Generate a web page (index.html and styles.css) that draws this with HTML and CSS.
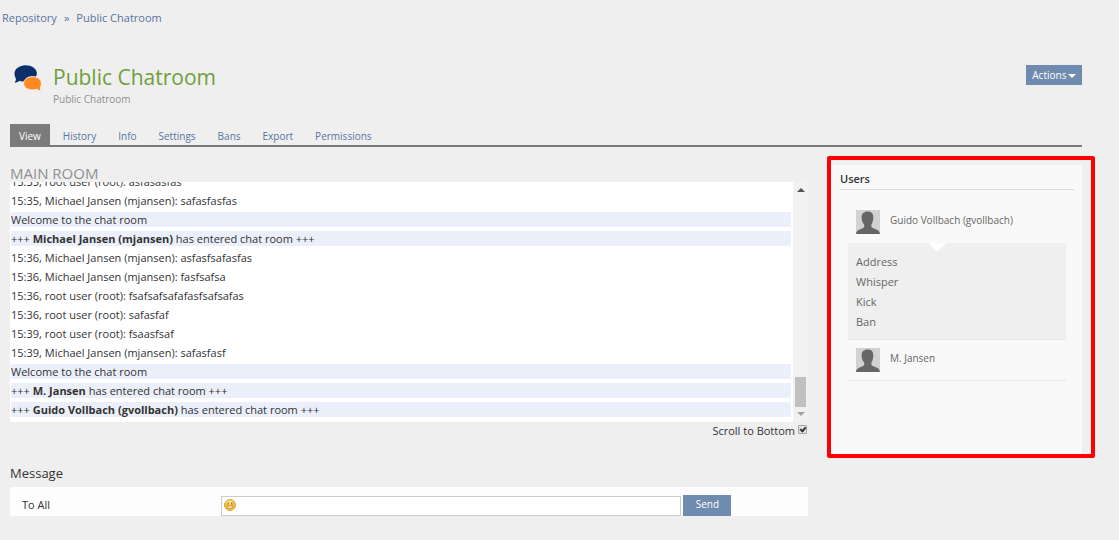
FILE: index.html
```
<!DOCTYPE html>
<html lang="en">

<head>
  <meta charset="UTF-8">
  <meta name="viewport" content="width=device-width, initial-scale=1.0">
  <title>Public Chatroom</title>
  <link rel="stylesheet" href="styles.css">
</head>

<body>
  <nav class="breadcrumb">
    <a href="#">Repository</a>
    <span>»</span>
    <a href="#">Public Chatroom</a>
  </nav>

  <header class="page-header">
    <svg class="room-icon" viewBox="0 0 28 28" width="28" height="28" aria-hidden="true">
      <path fill="#0b2f6b" d="M11.500 1.200C5.500 1.200 .5 4.800 .5 9.500c0 2.300 .7 3.800 1.400 5 .1 1.400-.5 2.900-1.200 4.300 2.200-.2 3.700-1 4.800-2 1.600 .6 3.600 .8 5.600 .8 6.200 0 11.800-3.600 11.800-8.300S17.500 1.200 11.500 1.200z" />
      <path fill="#ff8a1f" stroke="#efefef" d="M18.500 12.600c-5 0-8.900 2.900-8.900 6.700s3.900 6.700 8.900 6.700c1.600 0 3-.3 4.200-.8 1.200 1 2.700 1.800 4.600 2-.7-1.200-1.100-2.500-1-3.800.8-1.200 1.200-2.600 1.200-4.100 0-3.800-4-6.700-9-6.700z" />
    </svg>
    <div class="page-title">
      <h1>Public Chatroom</h1>
      <p>Public Chatroom</p>
    </div>
    <button class="btn actions" type="button">Actions <span class="caret"></span></button>
  </header>

  <nav class="tabs">
    <a href="#" class="active">View</a>
    <a href="#">History</a>
    <a href="#">Info</a>
    <a href="#">Settings</a>
    <a href="#">Bans</a>
    <a href="#">Export</a>
    <a href="#">Permissions</a>
  </nav>

  <div class="content">
    <main class="chat">
      <h2>MAIN ROOM</h2>
      <div class="log">
        <div class="messages">
          <div class="msg">15:35, root user (root): asfasasfas</div>
          <div class="msg">15:35, Michael Jansen (mjansen): safasfasfas</div>
          <div class="msg notice">Welcome to the chat room</div>
          <div class="msg notice">+++ <b>Michael Jansen (mjansen)</b> has entered chat room +++</div>
          <div class="msg">15:36, Michael Jansen (mjansen): asfasfsafasfas</div>
          <div class="msg">15:36, Michael Jansen (mjansen): fasfsafsa</div>
          <div class="msg">15:36, root user (root): fsafsafsafafasfsafsafas</div>
          <div class="msg">15:36, root user (root): safasfaf</div>
          <div class="msg">15:39, root user (root): fsaasfsaf</div>
          <div class="msg">15:39, Michael Jansen (mjansen): safasfasf</div>
          <div class="msg notice">Welcome to the chat room</div>
          <div class="msg notice">+++ <b>M. Jansen</b> has entered chat room +++</div>
          <div class="msg notice">+++ <b>Guido Vollbach (gvollbach)</b> has entered chat room +++</div>
        </div>
        <div class="scrollbar" aria-hidden="true">
          <span class="arrow up"></span>
          <span class="thumb"></span>
          <span class="arrow down"></span>
        </div>
      </div>
      <div class="autoscroll">
        <label for="autoscroll">Scroll to Bottom</label>
        <input type="checkbox" id="autoscroll" checked>
      </div>

      <h3>Message</h3>
      <form class="message-form">
        <label for="message">To All</label>
        <div class="message-row">
          <div class="message-box">
            <button class="smiley" type="button" aria-label="Insert smiley">
              <svg viewBox="0 0 12 12" width="12" height="12">
                <circle cx="6" cy="6" r="5.500" fill="#f6c33c" stroke="#dda63c" />
                <ellipse cx="5.500" cy="3.500" rx="3.500" ry="2" fill="#fbe08a" />
                <path fill="#8a6a2a" d="M3.500 3.500h1.200v2H3.500zM7.200 3.500h1.200v2H7.200z" />
                <path fill="#fbe9b4" stroke="#b08030" stroke-width=".7" d="M2.800 7h6.400c-.4 1.700-1.600 2.600-3.200 2.600S3.200 8.700 2.800 7z" />
              </svg>
            </button>
            <input type="text" id="message">
          </div>
          <button class="btn send" type="submit">Send</button>
        </div>
      </form>
    </main>

    <aside class="highlight">
      <section class="users">
        <h2>Users</h2>
        <ul class="user-list">
          <li>
            <div class="user">
              <svg class="avatar" viewBox="0 0 24 24" width="24" height="24" aria-hidden="true">
                <rect width="24" height="24" fill="#d2d2d2" />
                <path fill="#666" d="M11.500 1.500c3.600-.3 6 1.800 5.800 6.200 0 2.500-.8 5.200-1.900 6.800v2.600c1.300 1.800 4.800 2 6.800 3.400 1 .8 1.500 2 1.800 3.500H0c.2-1.600.7-2.600 1.800-3.400 2.300-1.500 5.400-1.800 6.400-3.500v-2.600C6.600 13 5.600 10 5.600 7.700c0-4 2.200-6.200 5.900-6.200z" />
              </svg>
              <span>Guido Vollbach (gvollbach)</span>
            </div>
            <div class="user-menu">
              <a href="#">Address</a>
              <a href="#">Whisper</a>
              <a href="#">Kick</a>
              <a href="#">Ban</a>
            </div>
          </li>
          <li>
            <div class="user">
              <svg class="avatar" viewBox="0 0 24 24" width="24" height="24" aria-hidden="true">
                <rect width="24" height="24" fill="#d2d2d2" />
                <path fill="#666" d="M11.500 1.500c3.600-.3 6 1.800 5.800 6.200 0 2.500-.8 5.200-1.900 6.800v2.600c1.300 1.800 4.800 2 6.800 3.400 1 .8 1.500 2 1.800 3.500H0c.2-1.600.7-2.600 1.800-3.400 2.300-1.500 5.400-1.800 6.400-3.500v-2.600C6.600 13 5.600 10 5.600 7.700c0-4 2.200-6.200 5.900-6.200z" />
              </svg>
              <span>M. Jansen</span>
            </div>
          </li>
        </ul>
      </section>
    </aside>
  </div>
</body>

</html>
```
FILE: styles.css
```
* {
  box-sizing: border-box;
}

body {
  margin: 0;
  background: #efefef;
  color: #333;
  font-family: "Open Sans", Verdana, Arial, sans-serif;
  font-size: 11px;
  line-height: 15px;
}

h1,
h2,
h3,
p,
ul {
  margin: 0;
  padding: 0;
  font-weight: normal;
}

a {
  color: #5874a0;
  text-decoration: none;
}

input,
button {
  font-family: inherit;
}

.btn {
  border: 0;
  background: #708bb0;
  color: #fff;
  font-size: 10px;
  line-height: 14px;
  cursor: pointer;
}

.breadcrumb {
  display: flex;
  gap: 7px;
  padding: 10px 2px 0;
}

.breadcrumb span {
  color: #5874a0;
}

/* Title row */
.page-header {
  display: flex;
  align-items: flex-start;
  padding: 39px 37px 0 14px;
}

.room-icon {
  flex: none;
  margin-right: 11px;
}

.page-title {
  flex: 1;
}

.page-title h1 {
  color: #6ea03c;
  font-size: 21px;
  line-height: 26px;
}

.page-title p {
  color: #909090;
  font-size: 10px;
  line-height: 18px;
}

.actions {
  margin-top: 1px;
  padding: 3px 6px;
}

.caret {
  display: inline-block;
  border-top: 4px solid #fff;
  border-left: 4px solid transparent;
  border-right: 4px solid transparent;
  margin-left: -1px;
  vertical-align: middle;
}

/* Tabs */
.tabs {
  display: flex;
  gap: 4px;
  margin: 16px 37px 0 10px;
  border-bottom: 2px solid #7b7b7b;
}

.tabs a {
  padding: 5px 9px 2px;
  font-size: 10px;
  line-height: 14px;
}

.tabs .active {
  background: #7b7b7b;
  color: #fff;
}

.content {
  display: flex;
  align-items: flex-start;
  gap: 19px;
  padding: 9px 24px 0 10px;
}

/* Chat log */
.chat {
  flex: 1;
  min-width: 0;
  padding-top: 9px;
}

.chat h2 {
  color: #909090;
  font-size: 15px;
  line-height: 17px;
}

.log {
  display: flex;
  height: 240px;
}

.messages {
  display: flex;
  flex: 1;
  flex-direction: column;
  justify-content: flex-end;
  gap: 4px;
  padding: 0 2px 5px 1px;
  background: #fff;
  overflow: hidden;
}

.msg {
  flex: none;
}

.notice {
  background: #eaeff9;
}

.scrollbar {
  display: flex;
  flex-direction: column;
  align-items: center;
  width: 15px;
  padding: 6px 2px 6px;
  background: #f1f1f1;
}

.arrow {
  border-left: 4px solid transparent;
  border-right: 4px solid transparent;
}

.arrow.up {
  border-bottom: 4px solid #505050;
}

.arrow.down {
  border-top: 4px solid #a3a3a3;
}

.thumb {
  width: 11px;
  height: 30px;
  margin: auto 0 5px;
  background: #c1c1c1;
}

.autoscroll {
  display: flex;
  justify-content: flex-end;
  gap: 3px;
  padding: 1px 1px 0 0;
}

.autoscroll input {
  width: 9px;
  height: 9px;
  margin: 2px 0 0;
  appearance: none;
  border: 1px solid #a5a5a5;
  border-radius: 1px;
  background: #e3e3e3;
}

.autoscroll input:checked::before {
  content: "";
  display: block;
  box-sizing: content-box;
  width: 2px;
  height: 4px;
  margin-left: 2px;
  border: solid #333;
  border-width: 0 2px 2px 0;
  transform: rotate(40deg);
}

.chat h3 {
  margin-top: 26px;
  font-size: 13px;
  line-height: 18px;
}

.message-form {
  display: grid;
  grid-template-columns: 1fr 3fr;
  gap: 3px;
  margin-top: 5px;
  padding: 8px 0 0 12px;
  background: #fdfdfd;
}

.message-form label {
  padding-top: 2px;
}

.message-row {
  display: flex;
  align-items: flex-end;
  gap: 2px;
}

.message-box {
  display: flex;
  align-items: center;
  flex: 0 1 460px;
  height: 20px;
  border: 1px solid #ccc;
  background: #fff;
}

.message-box input {
  flex: 1;
  min-width: 0;
  border: 0;
  outline: 0;
  background: none;
  font-size: 11px;
}

.smiley {
  display: flex;
  margin-left: 2px;
  padding: 0 0 2px;
  border: 0;
  background: none;
  cursor: pointer;
}

.send {
  padding: 2px 12px 5px 13px;
}

/* Users panel */
.highlight {
  flex: 0 0 268px;
  padding: 5px 9px 0 0;
  border: 4px solid #f00;
  border-radius: 2px;
}

.users {
  min-height: 289px;
  padding: 6px 8px 0 9px;
  background: #f9f9f9;
}

.users h2 {
  padding-bottom: 3px;
  border-bottom: 1px solid #ddd;
  font-size: 11px;
  font-weight: 600;
}

.user-list {
  margin: 12px 8px 0;
  list-style: none;
}

.user-list li {
  border-bottom: 1px solid #e5e5e5;
}

.user {
  display: flex;
  gap: 10px;
  padding: 8px;
  color: #666;
  font-size: 10px;
}

.user span {
  line-height: 20px;
}

.user-menu {
  position: relative;
  margin-top: 1px;
  padding: 9px 8px 7px;
  background: #efefef;
}

.user-menu::before {
  content: "";
  position: absolute;
  top: 0;
  left: 80px;
  border-top: 9px solid #fff;
  border-left: 9px solid transparent;
  border-right: 9px solid transparent;
}

.user-menu a {
  display: block;
  color: #666;
  line-height: 20px;
}
```
